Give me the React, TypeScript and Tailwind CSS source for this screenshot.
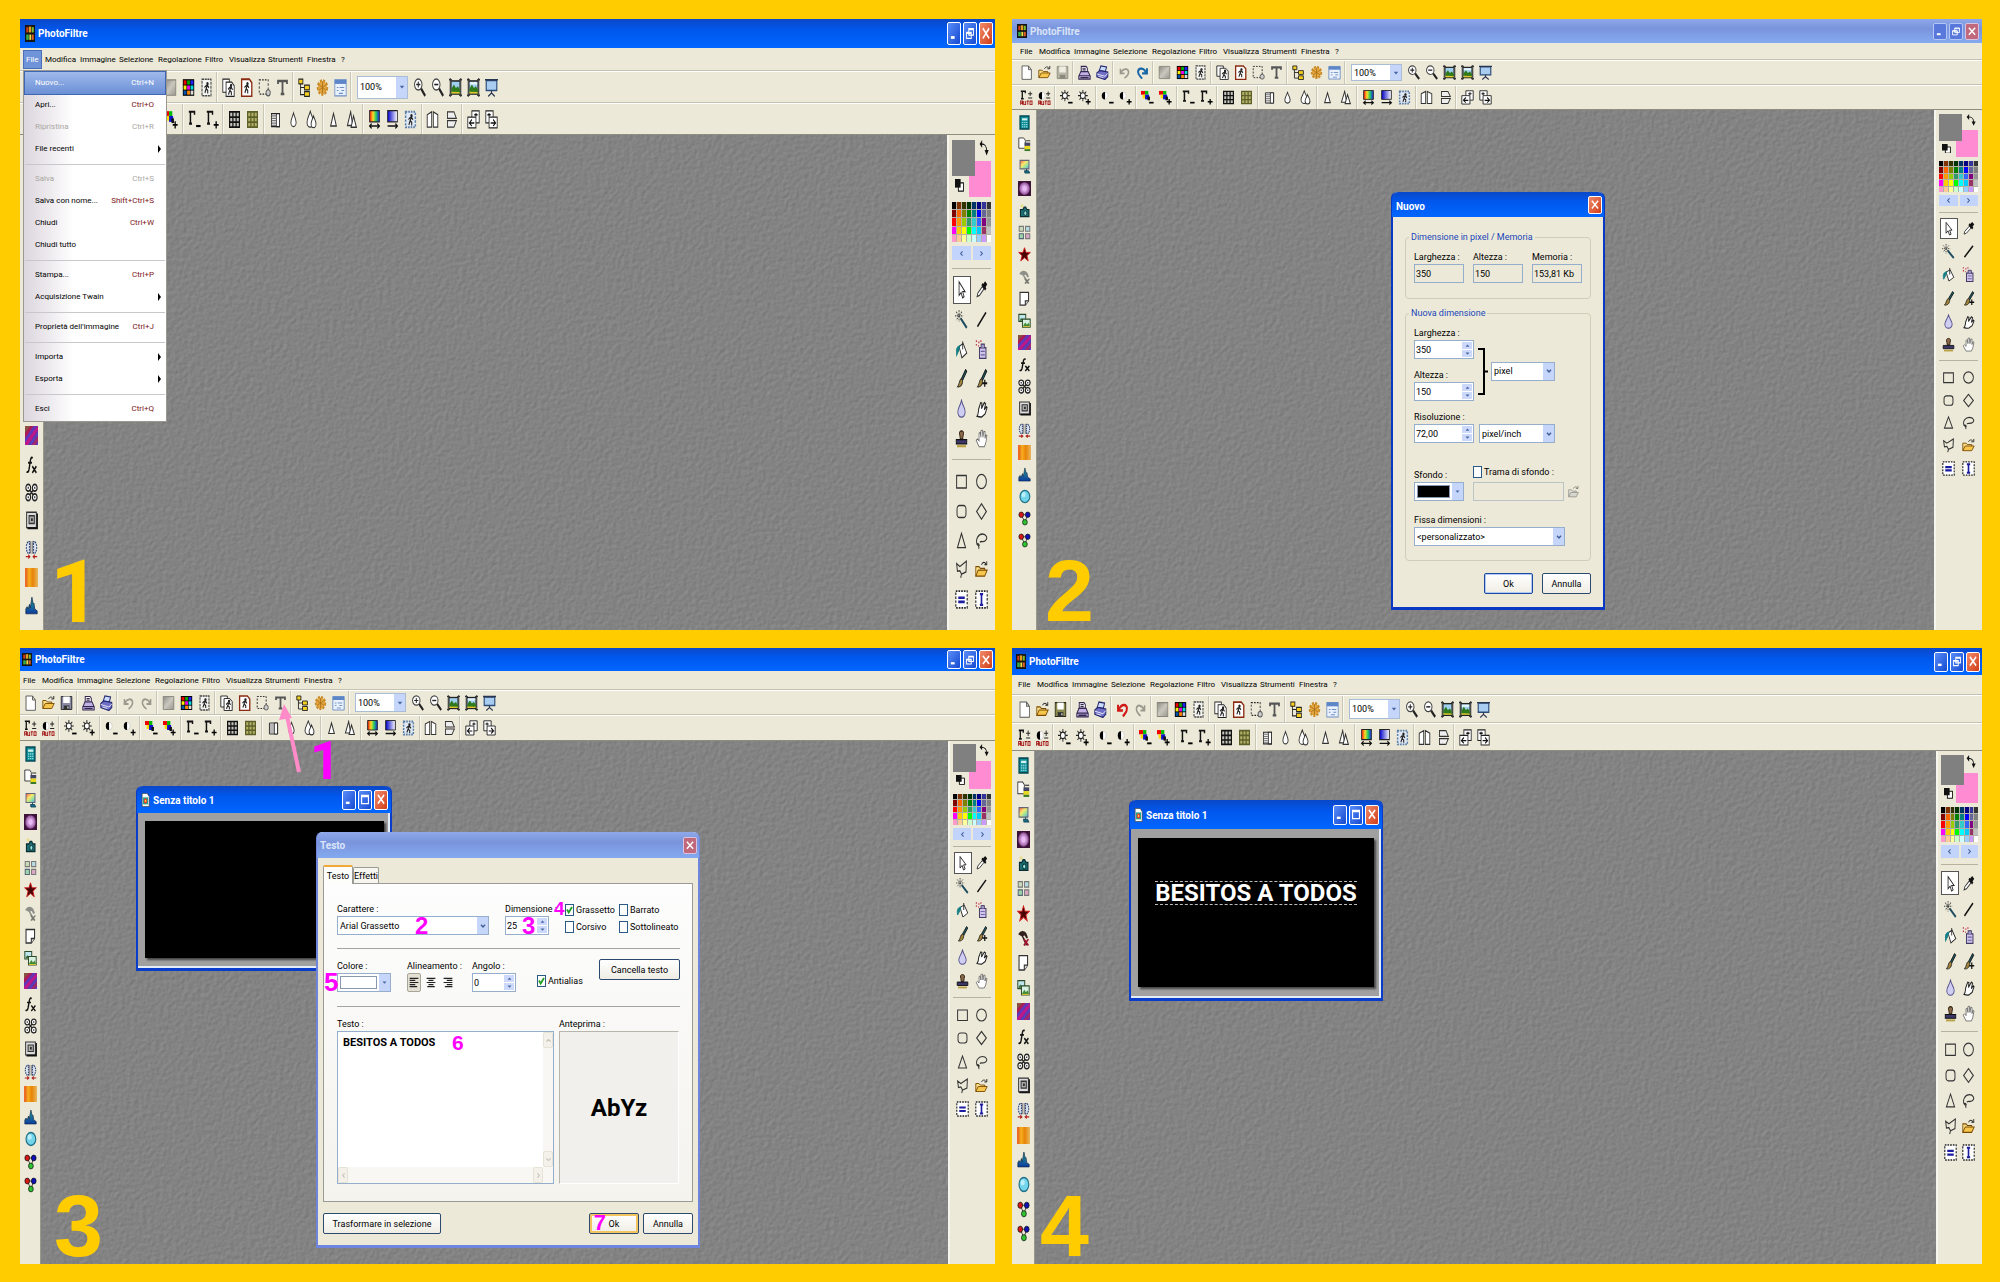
import { useId, type ReactNode } from "react";

/* ---------- icon drawings, 16 x 16 grid ---------- */

const man = (
  <g stroke="#222" strokeWidth="1.3" fill="none">
    <path d="M9 6.5 7.5 9l2 1.5V13M7.5 9 6 12.5M5.5 8l2-1.5h2l1.5 1.8" />
    <circle cx="9.2" cy="4.8" r=".8" fill="#222" />
  </g>
);
const minus = <path d="M10 13.5h5.5" stroke="#000" strokeWidth="1.8" />;
const plus = <path d="M9.5 12.5h6M12.5 9.5v6" stroke="#000" strokeWidth="1.6" />;
const gamma = <path d="M1 1.5h7V4M3 1.5v10M1.3 11.5h3.6" stroke="#111" strokeWidth="1.8" fill="none" />;
const halfMoon = (
  <g>
    <circle cx="5" cy="6" r="3.8" fill="#fff" stroke="#bbb" strokeWidth=".6" />
    <path d="M5 2a4 4 0 0 0 0 8z" fill="#000" />
  </g>
);
const sun = (
  <g stroke="#222" strokeWidth="1.1" fill="#fff">
    <path d="M6 0v12M0 6h12M1.8 1.8l8.4 8.4M10.2 1.8 1.8 10.2" />
    <circle cx="6" cy="6" r="3" />
  </g>
);
const rgb = (
  <g>
    <path d="M0 1h5v4H0z" fill="#e00" />
    <path d="M5 1h4v4H5z" fill="#0b0" />
    <path d="M2 5h4v4H2z" fill="#fd0" />
    <path d="M5 5h5v5H5z" fill="#11c" />
    <path d="M8 7h3v4H8z" fill="#111" />
  </g>
);
const autoMark = (
  <path
    d="M.8 15.800v-4h2.400v4M.8 14h2.400M4.600 11.800v4h2.400v-4M8.300 11.800h2.700M9.600 11.800v4M12.300 11.800h2.500v4h-2.500z"
    stroke="#a01010"
    strokeWidth="1.100"
    fill="none"
  />
);
const plusMinus = <path d="M10 4h5M12.5 1.5v5M10 8.5h5" stroke="#222" strokeWidth="1.1" />;
const printer = (
  <g stroke="#33284f" strokeWidth="1.2">
    <path d="M4 7V1.5h6l1.5 2V7z" fill="#fff" />
    <path d="M1 12 3.5 7h9L15 12v3H1z" fill="#c3b0e4" />
    <path d="M1 11.5h14M5.5 3.5h4M5.5 5.2h4M3 13.4h10" fill="none" />
  </g>
);
const landscape = (
  <g>
    <rect x="2.5" y="2.5" width="11" height="11" fill="#9fd0f0" stroke="#222" strokeWidth="1.300" />
    <path d="M3 13V9l3-3.500 2.5 3L11 7l2.500 3v3z" fill="#2f7a1c" />
    <path d="M3 13v-1.500l10 .2V13z" fill="#e5c430" />
    <path d="M1.500 0v16M14.500 0v16" stroke="#333" strokeWidth="1.2" />
    <path d="M0 1.500h3.500M12.500 1.500H16M0 14.500h3.500M12.500 14.500H16" stroke="#333" strokeWidth="1.2" />
  </g>
);
const folder = (
  <g stroke="#7a4a00" strokeWidth="1">
    <path d="M1 13.5v-8h4l1.5 1.5H12v2.5" fill="#fbe08a" />
    <path d="m1 13.5 3-5h11l-3 5z" fill="#f7c64d" />
    <path d="M8 4c1.5-2.5 4-2.5 5.5-.5M14.5 1v3h-3" stroke="#222" fill="none" />
  </g>
);
const magnifier = (
  <g>
    <circle cx="6.5" cy="5.5" r="4.6" fill="#fff" stroke="#444" strokeWidth="1.2" />
    <path d="m10 9 5 6" stroke="#222" strokeWidth="2.4" />
  </g>
);
const hammer = <path d="M1.5 5c3-4 7-4 10-1l2 4-2 1-2-3-2 .5L13 14l-2 2L6 7 4 6z" />;
const gridLines = <path d="M1 5.7h14M1 10.3h14M5.7 1v14M10.3 1v14" />;
const circles4 = (
  <g fill="#fff" stroke="#222" strokeWidth="1.4">
    <path d="M5 5l6 6M11 5l-6 6" />
    <circle cx="4" cy="4" r="2.9" />
    <circle cx="12" cy="4" r="2.9" />
    <circle cx="4" cy="12" r="2.9" />
    <circle cx="12" cy="12" r="2.9" />
    <path d="M4 3.2v1.600M12 3.2v1.600M4 11.2v1.600M12 11.2v1.600" />
  </g>
);
const dots3 = (
  <g stroke="#111" strokeWidth=".8">
    <path d="M4 4h8L8.500 12z" fill="none" />
    <circle cx="4" cy="4" r="2.900" fill="#d81818" />
    <circle cx="12" cy="4" r="2.900" fill="#1010b8" />
    <circle cx="8.500" cy="12" r="2.900" fill="#2fc52f" />
  </g>
);

const drawings: Record<string, ReactNode> = {
  app: (
    <g>
      <rect width="16" height="16" fill="#151515" />
      <path d="M2 2h3v5H2z" fill="#d43a1c" /><path d="M6 1.500h4V7H6z" fill="#e8a020" /><path d="M11 2h3v5h-3z" fill="#7fc030" />
      <path d="M2 9h4v5H2z" fill="#38b04a" /><path d="M7 9h3v5H7z" fill="#f0e040" /><path d="M11 9h3v5h-3z" fill="#e0602a" />
    </g>
  ),
  doc: (
    <g>
      <path d="M2 .5h9l3.500 3.500v11.500H2z" fill="#fff" stroke="#444" />
      <rect x="3.500" y="5" width="9" height="8" fill="#2a8" /><circle cx="8" cy="9" r="3" fill="#e33" /><circle cx="8" cy="9" r="1.300" fill="#fd3" />
    </g>
  ),
  new: <path d="M2.500 1h8L14 5v10.300H2.500zM10.500 1v4H14" fill="#fff" stroke="#555" />,
  open: folder,
  save: (
    <g>
      <path d="M1.500 1.500h13v13h-13z" fill="#8a8aa8" stroke="#222" /><path d="M4 1.500h8V8H4z" fill="#fff" /><path d="M4.500 10.500h7v4h-7z" fill="#333" /><path d="M9 11.500h1.500v2H9z" fill="#ddd" />
    </g>
  ),
  saveOlive: (
    <g>
      <path d="M1.500 1.500h13v13h-13z" fill="#8d8a4e" stroke="#2c2a16" /><path d="M4 1.500h8V8H4z" fill="#fff" /><path d="M4.500 10.500h7v4h-7z" fill="#333" /><path d="M9 11.500h1.500v2H9z" fill="#ddd" />
    </g>
  ),
  saveOff: (
    <g>
      <path d="M1.500 1.500h13v13h-13z" fill="#b9b6a6" stroke="#8b897c" /><path d="M4 1.500h8V8H4z" fill="#efede2" /><path d="M4.500 10.500h7v4h-7z" fill="#8b897c" />
    </g>
  ),
  print: printer,
  print2: (
    <g stroke="#23266e" strokeWidth="1.200">
      <path d="m4 6 2-5 7 1-1.500 5z" fill="#c9dcff" /><path d="M1 8.500 4.500 6l10 1.500v5L11 15.500 1 12.500z" fill="#6f6fc8" /><path d="M1 9.500 11 12l3.500-3M3 12l6 1.500" stroke="#fff" strokeWidth=".9" fill="none" />
    </g>
  ),
  undoOff: <path d="M3 4v5h5M3.500 8.500C6 3.500 12 3 13 7c.5 3-2 5-5 7" fill="none" stroke="#9b998d" strokeWidth="1.900" />,
  undo: <path d="M2.500 3.500v5.500h6M3.500 8.500C6 2.500 13 2.500 13.500 7c.3 3.500-3 5-5 7.500" fill="none" stroke="#d01818" strokeWidth="2.400" />,
  redoOff: <path d="M13 4v5H8M12.500 8.500C10 3.500 4 3 3 7c-.5 3 2 5 5 7" fill="none" stroke="#9b998d" strokeWidth="1.900" />,
  redo: <path d="M13.500 3.500v5.500h-6M12.500 8.500C10 2.500 3 2.500 2.500 7c-.3 3.500 3 5 5 7.500" fill="none" stroke="#1766a8" strokeWidth="2.400" />,
  grad: <path d="M1.500 1.500h13v13h-13z" fill="url(#pf-grey)" stroke="#88867c" />,
  colors: (
    <g>
      <path d="M1 1h14v14H1z" fill="#000" />
      <path d="M2 2h3.500v3.500H2z" fill="#e00" /><path d="M6.300 2h3.500v3.500H6.300z" fill="#0a0" /><path d="M10.600 2H14v3.500h-3.400z" fill="#22f" />
      <path d="M2 6.300h3.500v3.500H2z" fill="#fe0" /><path d="M6.300 6.300h3.500v3.500H6.300z" fill="#e0e" /><path d="M10.600 6.300H14v3.500h-3.400z" fill="#0dd" />
      <path d="M2 10.600h3.500V14H2z" fill="#05a" /><path d="M6.300 10.600h3.500V14H6.300z" fill="#f80" /><path d="M10.600 10.600H14V14h-3.400z" fill="#ddd" />
    </g>
  ),
  man: <g><path d="M2.500 1h11v14h-11z" fill="#f4f4f0" stroke="#444" strokeDasharray="2.500 .8" strokeWidth="1.300" />{man}</g>,
  copy: <g><path d="M1 1h8v11H1z" fill="#fff" stroke="#222" /><path d="M5 3.500h7l3 3V15.500H5z" fill="#fff" stroke="#222" /><g transform="translate(2 1.500)">{man}</g></g>,
  paste: <g><path d="M2 1h9.500l3 3v11.500H2z" fill="#fff" stroke="#8a2a10" strokeWidth="1.600" />{man}</g>,
  sel: <g fill="none"><path d="M1.500 1.500h11v12h-11z" stroke="#222" strokeDasharray="2 1.500" /><circle cx="12.500" cy="12.500" r="2.600" fill="#ccc" stroke="#555" /></g>,
  tree: (
    <g>
      <path d="M3 3v11h5M3 8h5" fill="none" stroke="#222" /><path d="M1 1h5v4H1zM8 6h6v4H8zM8 11.500h6v4H8z" fill="#f5d020" stroke="#222" />
    </g>
  ),
  gear: (
    <g>
      <circle cx="8" cy="8" r="5.500" fill="#e0a030" stroke="#c98a28" strokeWidth="3" strokeDasharray="2.400 1.300" /><circle cx="8" cy="8" r="5" fill="#e2a640" /><path d="M8 3v10M3.500 5.500l9 5M3.500 10.500l9-5" stroke="#a86a14" strokeWidth=".8" />
    </g>
  ),
  form: <g><path d="M1 1.500h14v13.500H1z" fill="#e9f1fc" stroke="#6d8fc2" /><path d="M1 1.500h14v3.500H1z" fill="#5c86c8" /><path d="M3.500 8h2M7 8h5.500M3.500 10.500h2M9 10.500h3.500M6 13h5" stroke="#6d8fc2" /></g>,
  zoomIn: <g>{magnifier}<path d="M4 5.500h5M6.500 3v5" stroke="#222" strokeWidth="1.200" /></g>,
  zoomOut: <g>{magnifier}<path d="M4 5.500h5" stroke="#222" strokeWidth="1.400" /></g>,
  fit: landscape,
  fit2: <g>{landscape}<path d="M3.500 4.500h9" stroke="#e8f4fc" strokeWidth="2" /></g>,
  screen: <g><path d="M1.500 2h13v8.500h-13z" fill="#a9cdf0" stroke="#2a4a78" strokeWidth="1.400" /><path d="M0 1.500h16M8 10.500v3M4 15.500l4-3 4 3" stroke="#2a3550" strokeWidth="1.300" fill="none" /></g>,
  gammaAuto: <g><path d="M1 1.200h5.500V3.500M2.800 1.200v8M1.200 9.200h3.400" stroke="#111" strokeWidth="1.600" fill="none" />{plusMinus}{autoMark}</g>,
  contrastAuto: <g>{halfMoon}{plusMinus}{autoMark}</g>,
  sunMinus: <g>{sun}{minus}</g>,
  sunPlus: <g>{sun}{plus}</g>,
  moonMinus: <g>{halfMoon}{minus}</g>,
  moonPlus: <g>{halfMoon}{plus}</g>,
  rgbMinus: <g>{rgb}{minus}</g>,
  rgbPlus: <g>{rgb}{plus}</g>,
  gammaMinus: <g>{gamma}{minus}</g>,
  gammaPlus: <g>{gamma}{plus}</g>,
  gridDark: <g stroke="#111" strokeWidth="1.500"><path d="M2 1.500h12v13H2z" fill="#c4c4bc" /><path d="M2 6h12M2 10.300h12M6 1.500v13M10 1.500v13" /></g>,
  gridOlive: <g stroke="#5c6028" strokeWidth="1.500"><path d="M2 1.500h12v13H2z" fill="#b3b068" /><path d="M2 6h12M2 10.300h12M6 1.500v13M10 1.500v13" /></g>,
  half: <g><path d="M3 3h10v11H3z" fill="#eee" stroke="#222" /><path d="M9 3h4v11H9z" fill="#fff" stroke="#222" /><path d="M3.500 5h5M3.500 7h5M3.500 9h5M3.500 11h5M3.500 13h5" stroke="#777" strokeWidth="1" /></g>,
  drop: <path d="M8 2.500c-1.500 4-3.200 5.500-3.200 8a3.200 3.500 0 0 0 6.400 0c0-2.500-1.700-4-3.200-8z" fill="#fff" stroke="#333" strokeWidth="1.100" />,
  drop2: <g fill="#fff" stroke="#333" strokeWidth="1.100"><path d="M6.500 1C5 5 2.500 7 2.500 10.500a4 4 0 0 0 8 0C10.500 7 8 5 6.500 1z" /><path d="M10.500 5c-1.200 3-3 4.300-3 6.700a3 3.200 0 0 0 6 0c0-2.400-1.800-3.700-3-6.700z" /></g>,
  tri: <path d="M8 3 4.500 13.500h7z" fill="#fff" stroke="#333" strokeWidth="1.200" />,
  tri2: <g fill="#fff" stroke="#333" strokeWidth="1.200"><path d="M7 1.500 3 13h6.500z" /><path d="M10.500 5 7.500 14.500h6.500z" /></g>,
  rainbow: <g><path d="M2 .5h12v9.500H2z" fill="url(#pf-rainbow)" stroke="#222" /><path d="M2 13.500h12M4.500 11.500l-2.500 2 2.500 2M11.500 11.500l2.500 2-2.500 2" stroke="#111" strokeWidth="1.300" fill="none" /></g>,
  blueGrad: <g><path d="M2 .5h12v9.500H2z" fill="url(#pf-blue)" stroke="#222" /><path d="M2 13.500h12M11.500 11.500l2.500 2-2.500 2" stroke="#111" strokeWidth="1.300" fill="none" /></g>,
  stamp: <g><path d="M2 1.500h12v13H2z" fill="#dfe9f5" stroke="#5a7ea8" strokeWidth="1.800" strokeDasharray="2 1.200" />{man}</g>,
  flipH: <path d="M1.500 4 7 1.500v13H1.500zM9 1.500 14.500 4v10.500H9z" fill="#fff" stroke="#333" strokeWidth="1.100" />,
  flipV: <path d="M3 1.500h8l3 5.500H3zM3 9h11l-3 5.500H3z" fill="#eee" stroke="#333" strokeWidth="1.100" />,
  rotL: <g><path d="M6 .8h9v10H6z" fill="#fff" stroke="#222" /><path d="M1 6h10v9H1z" fill="#fff" stroke="#222" /><path d="M3 11h6M6 8l-3 3 3 2.500M9 4h4M11 2.500v3" stroke="#111" strokeWidth="1.200" fill="none" /></g>,
  rotR: <g><path d="M1 .8h9v10H1z" fill="#fff" stroke="#222" /><path d="M5 6h10v9H5z" fill="#fff" stroke="#222" /><path d="M7 11h6M10 8l3 3-3 2.500M3 4h4M5 2.500v3" stroke="#111" strokeWidth="1.200" fill="none" /></g>,
  calc: <g><path d="M2.500 1h11v14h-11z" fill="#0f8f96" stroke="#064a55" strokeWidth="1.600" /><path d="M5 3.500h6.500v2.300H5z" fill="#d6f2f0" /><path d="M5 8h6.500M5 10.300h6.500M5 12.600h6.500" stroke="#9adbe0" strokeWidth="1.300" strokeDasharray="1.500 1" /></g>,
  pageColor: <g><path d="M1 1h6l2 2.500V12H1z" fill="#fff" stroke="#333" /><path d="M8 6h7v3.500H8z" fill="#446" /><path d="M8 9.500h7V13H8z" fill="#e8d81c" /><path d="M8 13h7v2H8z" fill="#3a7a28" /><path d="M10 4h5" stroke="#222" /></g>,
  monitor: <g><path d="M2.500 1.500h11v9h-11z" fill="url(#pf-rainbow-soft)" stroke="#667" strokeWidth="1.200" /><path d="M10.500 10.500v2.500M8 12.500h5l1.500 2.500h-6z" stroke="#134a60" fill="#1b6a80" /></g>,
  vignette: <g><path d="M0 0h16v16H0z" fill="#3c1238" /><ellipse cx="8" cy="8" rx="6.500" ry="6.800" fill="url(#pf-violet)" /></g>,
  camera: <g><path d="M3 7h3l1.500-2.500h2L11 7h2.500v7.500H3z" fill="#1c6f74" stroke="#0b2d30" strokeWidth="1.300" /><ellipse cx="9" cy="10.800" rx="2" ry="2.400" fill="#8fe0d8" stroke="#0b2d30" /><path d="M5 1v4M3 3h4" stroke="#e6dc7a" strokeWidth="1.200" /></g>,
  squares: <g strokeWidth="1.200"><path d="M1.500 1.500h5.200v5.200H1.500z" fill="#c9dcb9" stroke="#777" /><path d="M9.300 1.500h5.200v5.200H9.300z" fill="#b7dbe2" stroke="#777" /><path d="M1.500 9.300h5.200v5.200H1.500z" fill="#9ed2a8" stroke="#567" /><path d="M9.300 9.300h5.200v5.200H9.300z" fill="#d9a9c4" stroke="#777" /></g>,
  star: <path d="m8 .8 1.900 5h5.300l-4.200 3.400 1.600 5.600L8 11.500l-4.600 3.300L5 9.200.8 5.800h5.300z" fill="#4a0606" stroke="#d01c1c" strokeWidth="1" />,
  hammerOff: <g fill="#8f8f8a">{hammer}<path d="m8.500 10.500 5 5M14 10.500l-5.500 5" stroke="#77776f" strokeWidth="1.600" /></g>,
  hammer: <g fill="#33211f">{hammer}<path d="m8.500 9.500 5.500 6M14 9.500l-5.500 6" stroke="#a11430" strokeWidth="1.900" /></g>,
  curl: <g><path d="M2.500 1.500h10.500v9l-4 4.500H2.500z" fill="#fff" stroke="#333" strokeWidth="1.300" /><path d="M13 10.500H9V15" fill="#ddd" stroke="#333" strokeWidth="1.300" /></g>,
  pics: <g strokeWidth="1.200"><path d="M1 1.500h8.500v7.500H1z" fill="#bfe6ee" stroke="#2a4a2a" /><path d="M1.500 8.500 4 5l2 3z" fill="#386a30" /><path d="M5.500 6.500h9.500v8.500H5.500z" fill="#d8f0e0" stroke="#2a4a2a" /><path d="m6 14 3-4 2 2.500 2-2 1.800 3.500z" fill="#3f8a34" /><path d="M6 14h8.700v1H6z" fill="#ddc030" /></g>,
  stripes: (
    <g>
      <path d="M0 0h16v16H0z" fill="#7a2a9c" /><path d="M0 0h7L0 6z" fill="#8a5040" /><path d="M7 0h3L0 10V6z" fill="#b01a50" /><path d="M12 0h2L0 14v-3z" fill="#5a3ac0" />
      <path d="M16 0v3L3 16H0v-2z" fill="#c0188a" /><path d="M16 5v2L7 16H5z" fill="#4a48c8" /><path d="M16 9v3l-4 4H9z" fill="#a82a60" /><path d="M16 14v2h-2z" fill="#5a4ad0" />
    </g>
  ),
  fx: <path d="M9.500 2.500C7.500 1.500 6.800 3 6.300 6L5 12c-.5 2-1.500 3-3 2M3.800 6.500h4.700M9 9.500l5 5.500M14 9.500 9 15" fill="none" stroke="#111" strokeWidth="1.700" />,
  circles: circles4,
  nested: <g><path d="M2 1h12v13H2z" fill="#ddd" stroke="#333" strokeWidth="1.200" /><path d="M3 14.500h12V2" fill="none" stroke="#111" strokeWidth="1.800" /><path d="M5 4h6.500v6.500H5z" fill="#aaa" stroke="#333" strokeWidth="1.200" /><path d="M7.500 6h2v2.500h-2z" fill="#222" /></g>,
  mirror: <g strokeWidth="1.300"><path d="M3.500 1.500C1 4 1 8.500 3.500 11h2v-9.500zM12.500 1.500c2.500 2.500 2.500 7 0 9.500h-2v-9.500z" stroke="#334a78" fill="#dbe2f0" strokeDasharray="1.600 .8" /><path d="M7 1v10.500M9 1v10.500" stroke="#556" strokeWidth=".8" /><path d="M1 14h5.500M9.500 14H15M4 12.500 6 14l-2 1.500M12 12.500 10 14l2 1.500" stroke="#b02020" fill="none" strokeWidth="1.100" /></g>,
  orange: <path d="M0 0h16v16H0z" fill="url(#pf-orange)" />,
  histogram: <path d="M1 15v-4l1.500-2 1.500 2 1.500-4 1 3L8.500 1 10 6.500l1-.5L12 11l3 1.500V15z" fill="url(#pf-hist)" stroke="#0c2448" strokeWidth=".7" />,
  ellipseBlue: <g><ellipse cx="8.500" cy="8" rx="6" ry="6.500" fill="#74d4ea" stroke="#20708a" strokeWidth="1.400" /><ellipse cx="7" cy="6" rx="2.500" ry="2.800" fill="#b9effa" /></g>,
  dots: dots3,
  swap: <g><path d="M5 0 1 4l4 4zM9 10h6.500L12.200 15.500z" fill="#111" /><path d="M4 4c6 0 8 2 8.200 7" fill="none" stroke="#111" strokeWidth="1.300" /></g>,
  bw: <g><path d="M6 5h9v10.500H6z" fill="#fff" stroke="#111" strokeWidth="1.600" /><path d="M0 0h10v11H0z" fill="#111" /></g>,
  cursor: <path d="M5 1.500v11.500l2.500-2.500 1.800 4.500 1.900-1-1.800-4.200h3z" fill="#fff" stroke="#222" strokeWidth="1" />,
  dropper: <g><path d="m2.500 14 1-3 5.500-5.500 2 2L5.500 13z" fill="#fff" stroke="#333" /><path d="m8 4.500 4.500 4.500L14 7l-1-1 2-2.500-2.500-2.500L10 3.300 9 2.500z" fill="#111" /></g>,
  wand: <g><path d="m7 7 7.500 8" stroke="#1c4a5e" strokeWidth="2.200" /><path d="M5 0v10M0 5h10M1.500 1.500l7 7M8.500 1.500l-7 7" stroke="#444" strokeWidth="1" strokeDasharray="1.600 .8" /></g>,
  line: <path d="M3 14 13.500 2" stroke="#111" strokeWidth="1.700" />,
  bucket: <g><path d="M5 5.500 10 3l4.500 8-6 4z" fill="#fff" stroke="#222" /><path d="M9.500 1v7" stroke="#222" /><path d="M6 5C2 5.500 1 8 2 13l2.500-4z" fill="#167f86" stroke="#167f86" /></g>,
  spray: <g><path d="M5.500 6.500h8v9h-8z" fill="#cfc4ea" stroke="#433a66" strokeWidth="1.200" /><path d="M7.500 6.500v-3h4v3" fill="#a89cc8" stroke="#433a66" /><path d="M1 1h1.500M4 2h1.500M1 4h1.500M4 5h1M6.500 1H8" stroke="#c03a50" strokeWidth="1.400" /><path d="M7 9.500h5M7 12.500h5" stroke="#6b5fa0" /></g>,
  brush: <g><path d="M13 .5 8 8l1.500 1.500L14.500 2z" fill="#1c5860" stroke="#111" strokeWidth=".9" /><path d="M8 8C5 8.500 6 12.500 3 15c3.500.500 6.500-1.500 6.500-5.500z" fill="#a08238" stroke="#222" strokeWidth=".9" /></g>,
  tear: <path d="M8 1C6.500 6 3.500 7.500 3.500 11a4.500 4.300 0 0 0 9 0C12.500 7.500 9.500 6 8 1z" fill="#cfcdf2" stroke="#55528a" strokeWidth="1.100" />,
  smudge: <path d="M2.500 14.500c2-2 1.500-3.500 2-6L7 3l1.500.5L8 8l3.500-5L13 4l-1.500 5L14 6.500l.8.8-2.300 5.200-4 2.500c-2 .5-4 0-6-.5z" fill="#fff" stroke="#222" strokeWidth="1.200" />,
  rubber: <g><path d="M8 1.500c2.500 0 3 2 2 4l-.5 3h-3L6 5.500c-1-2-.5-4 2-4z" fill="#8a6a4a" stroke="#2a1a0a" /><path d="M1.500 9h13v3.500h-13z" fill="#3b3568" stroke="#111" /><path d="M2.500 14.500h11" stroke="#b9a040" strokeWidth="1.800" /></g>,
  hand: <path d="M5 15 1.500 9.500 3 8.300 5 10V3.500L6.500 3l.8 4V1.500L9 1l.8 6 1-5 1.500.3V8l1.200-3 1.200.5-1.500 6.500L11.500 15z" fill="#fff" stroke="#666" strokeWidth=".9" />,
  rect: <path d="M2 3h12v10.500H2z" fill="none" stroke="#333" strokeWidth="1.200" />,
  oval: <circle cx="8" cy="8" r="6" fill="none" stroke="#333" strokeWidth="1.200" />,
  roundRect: <rect x="2.500" y="3" width="11" height="10" rx="3" fill="none" stroke="#333" strokeWidth="1.200" />,
  diamond: <path d="m8 1.500 6 6.500-6 6.500L2 8z" fill="none" stroke="#333" strokeWidth="1.200" />,
  triangle: <path d="M8 2 3 14h10z" fill="none" stroke="#333" strokeWidth="1.200" />,
  lasso: <path d="M4.500 15c1-1.500-.5-3-2-4 2-1 2.500.5 3 1.500M2.500 11C.5 7 4 2.500 9 2.500s7 3.500 4 5.500-5 0-7 1.500" fill="none" stroke="#333" strokeWidth="1.200" />,
  polyLasso: <path d="m2 3 4 2.500 8-4.500-.5 9L8 12 6 9 3 9.500zM8 12l-1 3" fill="none" stroke="#333" strokeWidth="1.200" />,
  selH: <g><path d="M1 1h14v14H1z" fill="#fff" stroke="#222" strokeWidth="1.400" strokeDasharray="2 1.300" /><path d="M4 6.500h8M4 10h8" stroke="#1c1ca0" strokeWidth="2.200" /></g>,
  selV: <g><path d="M1 1h14v14H1z" fill="#fff" stroke="#222" strokeWidth="1.400" strokeDasharray="2 1.300" /><path d="M8 3.500v9M6 3.500h4M6 12.500h4" stroke="#1c1ca0" strokeWidth="2" /></g>,
  letterT: <path d="M2.500 5V2.500h11V5M8 2.500v11M5.800 13.500h4.400" fill="none" stroke="#555" strokeWidth="2.200" />,
  down: <path d="m4 5.500 4 4.500 4-4.500" fill="none" stroke="#3e5c96" strokeWidth="2.600" />,
  up: <path d="m3.500 11 4.500-5.500 4.500 5.500z" fill="#4a66a4" />,
  downSolid: <path d="m3.500 5.500 4.500 5.500 4.500-5.500z" fill="#4a66a4" />,
  left: <path d="M10.500 3 6 8l4.500 5" fill="none" stroke="#3e5c96" strokeWidth="2.400" />,
  right: <path d="M5.500 3 10 8l-4.500 5" fill="none" stroke="#3e5c96" strokeWidth="2.400" />,
  leftOff: <path d="M10.500 3 6 8l4.500 5" fill="none" stroke="#c4c2b4" strokeWidth="2.400" />,
  rightOff: <path d="M5.500 3 10 8l-4.500 5" fill="none" stroke="#c4c2b4" strokeWidth="2.400" />,
  upOff: <path d="m3 10.500 5-5 5 5" fill="none" stroke="#c4c2b4" strokeWidth="2.400" />,
  downOff: <path d="m3 5.500 5 5 5-5" fill="none" stroke="#c4c2b4" strokeWidth="2.400" />,
  min: <path d="M3 12.500h6" stroke="#fff" strokeWidth="3" />,
  max: <path d="M2.500 3h11v10.500h-11zM2.500 4.500h11" fill="none" stroke="#fff" strokeWidth="1.800" />,
  restore: <path d="M6 3h7.500v7H6zM6 4h7.500M2.500 7H10v6.500H2.500zM2.500 8H10" fill="none" stroke="#fff" strokeWidth="1.400" />,
  close: <path d="m3 2.500 10 11M13 2.500 3 13.500" stroke="#fff" strokeWidth="2.300" />,
  alignL: <path d="M1 2h14M1 5h9M1 8h14M1 11h9M1 14h12" stroke="#222" strokeWidth="1.700" />,
  alignC: <path d="M1 2h14M4 5h8M1 8h14M4 11h8M2 14h12" stroke="#222" strokeWidth="1.700" />,
  alignR: <path d="M1 2h14M6 5h9M1 8h14M6 11h9M3 14h12" stroke="#222" strokeWidth="1.700" />,
  brushPlus: null,
};
drawings.brushPlus = (
  <g>
    {drawings.brush}
    <path d="M9 12h6M12 9v6" stroke="#111" strokeWidth="1.500" />
  </g>
);
drawings.grid = gridLines;

function Icon({ name, className }: { name: string; className: string }) {
  return (
    <svg viewBox="0 0 16 16" preserveAspectRatio="none" className={className} aria-hidden="true">
      {drawings[name]}
    </svg>
  );
}

function Defs() {
  return (
    <svg className="absolute size-0" aria-hidden="true">
      <defs>
        <linearGradient id="pf-grey" x2="1" y2="1"><stop offset="0" stopColor="#8d8b84" /><stop offset=".5" stopColor="#c9c7be" /><stop offset="1" stopColor="#98968e" /></linearGradient>
        <linearGradient id="pf-rainbow"><stop offset="0" stopColor="#e11" /><stop offset=".35" stopColor="#fd2" /><stop offset=".65" stopColor="#2c6" /><stop offset="1" stopColor="#22d" /></linearGradient>
        <linearGradient id="pf-rainbow-soft" x2="1" y2="1"><stop offset="0" stopColor="#f7574c" /><stop offset=".4" stopColor="#fbe96a" /><stop offset=".7" stopColor="#8fe0a0" /><stop offset="1" stopColor="#5a9af0" /></linearGradient>
        <linearGradient id="pf-blue"><stop offset="0" stopColor="#0000c8" /><stop offset="1" stopColor="#fff" /></linearGradient>
        <radialGradient id="pf-violet"><stop offset=".3" stopColor="#e9b9f4" /><stop offset="1" stopColor="#8a4a90" /></radialGradient>
        <linearGradient id="pf-orange"><stop offset="0" stopColor="#f0662a" /><stop offset=".15" stopColor="#e8741c" /><stop offset=".3" stopColor="#f8b020" /><stop offset=".6" stopColor="#e88408" /><stop offset="1" stopColor="#e8b860" /></linearGradient>
        <linearGradient id="pf-hist" x2="0" y2="1"><stop offset="0" stopColor="#2aa89a" /><stop offset="1" stopColor="#0c3a9c" /></linearGradient>
        <filter id="pf-paper" x="0" y="0" width="100%" height="100%" colorInterpolationFilters="sRGB">
          <feTurbulence type="fractalNoise" baseFrequency="0.24" numOctaves="3" seed="4" />
          <feDiffuseLighting surfaceScale="0.22" lightingColor="#b6b6b6" diffuseConstant="1"><feDistantLight azimuth="225" elevation="46" /></feDiffuseLighting>
        </filter>
      </defs>
    </svg>
  );
}

/* ---------- per-window metrics ---------- */

type Look = {
  inactive?: boolean;
  title: string; appIcon: string; caption: string; menu: string; bar1: string; bar2: string; icon: string; zoom: string;
  rail: string; railList: string; side: string; swatches: string; colors: string; pager: string; tools: string; shapes: string; cell: string;
};

const looks: Record<"a" | "b" | "c" | "d", Look> = {
  a: {
    title: "h-[29px] pl-[5px] pr-[2px]", appIcon: "h-[17px] w-[10px]", caption: "h-[23px]", menu: "h-[23px] pl-1", bar1: "h-8 pl-[3px]", bar2: "h-8 pl-[3px]", icon: "h-[19px] w-[13px]", zoom: "h-[23px]",
    rail: "w-6 pt-[3px]", railList: "h-[482px]", side: "w-12 pt-[5px]", swatches: "h-[57px]", colors: "mt-[5px] h-10", pager: "mt-1 h-[14px]", tools: "mt-2 h-[192px] py-[6px]", shapes: "h-[160px] pt-[7px] pb-[6px]", cell: "h-7",
  },
  b: {
    inactive: true,
    title: "h-[24px] pl-[5px] pr-[3px]", appIcon: "h-[14px] w-[10px]", caption: "h-[17px]", menu: "h-[17px] pl-[6px]", bar1: "h-[25px] pl-[5px]", bar2: "h-[25px] pl-[5px]", icon: "h-[15px] w-[13px]", zoom: "h-[17px]",
    rail: "w-[25px] pt-[2px]", railList: "h-[439px]", side: "w-12 pt-1", swatches: "h-[43px]", colors: "mt-1 h-[31px]", pager: "mt-[3px] h-[11px]", tools: "mt-[6px] h-[149px] py-[4px]", shapes: "h-[124px] pt-[5px] pb-[5px]", cell: "h-[21px]",
  },
  c: {
    title: "h-[23px] pl-[2px] pr-[2px]", appIcon: "h-[13px] w-[10px]", caption: "h-[19px]", menu: "h-[19px] pl-[1px]", bar1: "h-[25px] pl-[1px]", bar2: "h-[26px] pl-[1px]", icon: "h-[16px] w-[13px]", zoom: "h-[19px]",
    rail: "w-[21px] pt-[2px]", railList: "h-[453px]", side: "w-[47px] pt-[3px]", swatches: "h-[45px]", colors: "mt-[5px] h-[31px]", pager: "mt-[3px] h-3", tools: "mt-[6px] h-[152px] py-[4px]", shapes: "h-[126px] pt-[5px] pb-[3px]", cell: "h-[22px]",
  },
  d: {
    title: "h-[27px] pl-1 pr-[2px]", appIcon: "h-[15px] w-[10px]", caption: "h-5", menu: "h-5 pl-1", bar1: "h-7 pl-[3px]", bar2: "h-7 pl-[3px]", icon: "h-[17px] w-[13px]", zoom: "h-5",
    rail: "w-[23px] pt-[2px]", railList: "h-[493px]", side: "w-[46px] pt-1", swatches: "h-[48px]", colors: "mt-1 h-[35px]", pager: "mt-[3px] h-[13px]", tools: "mt-[6px] h-[168px] py-[5px]", shapes: "h-[138px] pt-[5px] pb-[5px]", cell: "h-6",
  },
};

/* ---------- window chrome ---------- */

const blueBar = "bg-linear-to-b from-[#0a48c8] via-[#0058ee] via-40% to-[#0066ff]";
const paleBar = "bg-linear-to-b from-[#8ea8ea] via-[#7a94dc] via-40% to-[#84aaf0]";

function CaptionButton({ kind, pale, size }: { kind: "min" | "max" | "restore" | "close"; pale?: boolean; size: string }) {
  const tone =
    kind === "close"
      ? pale ? "bg-[#c0697c] border-[#dbc3e0]" : "bg-linear-to-br from-[#f08a68] to-[#d03a14] border-white"
      : pale ? "bg-[#5878dc] border-[#b4c6f6]" : "bg-linear-to-br from-[#5a8cf8] to-[#1448d0] border-white";
  const label = { min: "Riduci a icona", max: "Ingrandisci", restore: "Ripristina in basso", close: "Chiudi" }[kind];
  return (
    <button type="button" aria-label={label} className={`flex w-[14px] items-center justify-center rounded-xs border ${tone} ${size}`}>
      <Icon name={kind} className="h-[70%] w-[10px]" />
    </button>
  );
}

function TitleBar({ look }: { look: Look }) {
  return (
    <header className={`flex shrink-0 items-center ${look.inactive ? paleBar : blueBar} ${look.title}`}>
      <Icon name="app" className={look.appIcon} />
      <h2 className={`ml-[3px] flex-1 pt-px text-[10px] font-bold leading-4 ${look.inactive ? "text-[#d8e4f8]" : "text-white"}`}>PhotoFiltre</h2>
      <div className="flex gap-[2px]">
        <CaptionButton kind="min" pale={look.inactive} size={look.caption} />
        <CaptionButton kind="restore" pale={look.inactive} size={look.caption} />
        <CaptionButton kind="close" pale={look.inactive} size={look.caption} />
      </div>
    </header>
  );
}

const menuEntries: [string, string][] = [
  ["File", "w-[17px] mr-[2px]"], ["Modifica", "w-[35px]"], ["Immagine", "w-[39px]"], ["Selezione", "w-[39px]"], ["Regolazione", "w-[47px]"],
  ["Filtro", "w-6"], ["Visualizza", "w-[39px]"], ["Strumenti", "w-[39px]"], ["Finestra", "w-[34px]"], ["?", "w-2"],
];

function MenuBar({ look, open, children }: { look: Look; open?: boolean; children?: ReactNode }) {
  return (
    <nav className={`relative flex shrink-0 items-center border-b border-[#c5c2b2] bg-[#ece9d8] text-[8px] ${look.menu}`}>
      {menuEntries.map(([name, width], i) => (
        <button
          key={name}
          type="button"
          className={`px-[2px] text-left leading-[17px] ${width} ${open && i === 0 ? "bg-[#6f94d8] text-white outline outline-[#4a6fb8]" : ""}`}
        >
          {name}
        </button>
      ))}
      {children}
    </nav>
  );
}

function ToolButton({ name, look }: { name: string; look: Look }) {
  return (
    <button type="button" aria-label={name} className="flex w-[18px] shrink-0 items-center justify-center">
      <Icon name={name} className={look.icon} />
    </button>
  );
}

const Rule = () => <span className="mx-[1px] h-full w-[2px] shrink-0 border-l border-r border-l-[#c9c6b4] border-r-[#f8f7f0]" />;

function Groups({ groups, look }: { groups: string[][]; look: Look }) {
  return (
    <>
      {groups.map((group, g) => [
        g > 0 ? <Rule key={`r${g}`} /> : null,
        ...group.map((name, i) => <ToolButton key={`${g}-${i}`} name={name} look={look} />),
      ])}
    </>
  );
}

function Toolbars({ look, save, undo, redo }: { look: Look; save: string; undo: string; redo: string }) {
  return (
    <>
      <div className={`flex shrink-0 items-center border-t border-b border-t-white border-b-[#c5c2b2] bg-[#ece9d8] ${look.bar1}`}>
        <Groups
          look={look}
          groups={[["new", "open", save], ["print", "print2"], [undo, redo], ["grad", "colors", "man"], ["copy", "paste", "sel", "letterT"], ["tree", "gear", "form"]]}
        />
        <Rule />
        <div className={`relative mr-[2px] ml-[4px] w-[51px] border border-[#a9bdd6] bg-white ${look.zoom}`}>
          <select aria-label="Zoom" className="size-full appearance-none pl-[2px] text-[9px] outline-none">
            <option>100%</option>
          </select>
          <span className="pointer-events-none absolute inset-y-0 right-0 flex w-[11px] items-center justify-center bg-[#c6d5fa]">
            <Icon name="downSolid" className="size-[8px]" />
          </span>
        </div>
        {["zoomIn", "zoomOut", "fit", "fit2", "screen"].map((n) => <ToolButton key={n} name={n} look={look} />)}
      </div>
      <div className={`flex shrink-0 items-center border-t border-b border-t-white border-b-[#8f8d80] bg-[#ece9d8] ${look.bar2}`}>
        <div className="flex h-full w-[478px] items-center justify-between">
          <Groups
            look={look}
            groups={[
              ["gammaAuto", "contrastAuto"], ["sunMinus", "sunPlus"], ["moonMinus", "moonPlus"], ["rgbMinus", "rgbPlus"], ["gammaMinus", "gammaPlus"],
              ["gridDark", "gridOlive"], ["half", "drop", "drop2"], ["tri", "tri2"], ["rainbow", "blueGrad", "stamp"], ["flipH", "flipV"], ["rotL", "rotR"],
            ]}
          />
        </div>
      </div>
    </>
  );
}

const railIcons = ["calc", "pageColor", "monitor", "vignette", "camera", "squares", "star", "hammerOff", "curl", "pics", "stripes", "fx", "circles", "nested", "mirror", "orange", "histogram", "ellipseBlue", "dots", "dots"];

function Rail({ look, count = 20, hammer }: { look: Look; count?: number; hammer?: boolean }) {
  return (
    <aside className={`shrink-0 border-r border-[#9a988a] bg-[#ece9d8] ${look.rail}`}>
      <div className={`flex flex-col ${look.railList}`}>
        {railIcons.slice(0, count).map((name, i) => (
          <button key={i} type="button" aria-label={name} className="flex flex-1 items-center justify-center">
            <Icon name={hammer && name === "hammerOff" ? "hammer" : name} className={look.icon} />
          </button>
        ))}
      </div>
    </aside>
  );
}

const colorCells = [
  "bg-[#000000]", "bg-[#803300]", "bg-[#333300]", "bg-[#003300]", "bg-[#003366]", "bg-[#000080]", "bg-[#333399]", "bg-[#333333]",
  "bg-[#800000]", "bg-[#ff6600]", "bg-[#808000]", "bg-[#008000]", "bg-[#008080]", "bg-[#0000ff]", "bg-[#666699]", "bg-[#808080]",
  "bg-[#ff0000]", "bg-[#ff9900]", "bg-[#99cc00]", "bg-[#339966]", "bg-[#33cccc]", "bg-[#3366ff]", "bg-[#800080]", "bg-[#969696]",
  "bg-[#ff00ff]", "bg-[#ffcc00]", "bg-[#ffff00]", "bg-[#00ff00]", "bg-[#00ffff]", "bg-[#00ccff]", "bg-[#993366]", "bg-[#c0c0c0]",
  "bg-[#ff99cc]", "bg-[#ffcc99]", "bg-[#ffff99]", "bg-[#ccffcc]", "bg-[#ccffff]", "bg-[#99ccff]", "bg-[#cc99ff]", "bg-[#ffffff]",
];

function Side({ look }: { look: Look }) {
  return (
    <aside className={`flex shrink-0 flex-col border-l-2 border-[#f6f5ee] bg-[#ece9d8] pr-1 pl-[3px] ${look.side}`}>
      <div className={`relative shrink-0 ${look.swatches}`}>
        <span className="absolute right-0 bottom-0 h-[63%] w-[22px] bg-[#ff8cd2]" />
        <span className="absolute top-0 left-0 h-[63%] w-[23px] bg-[#808080]" />
        <Icon name="swap" className="absolute top-0 right-[2px] h-[28%] w-[10px]" />
        <Icon name="bw" className="absolute bottom-[9%] left-[3px] h-[22%] w-[9px]" />
      </div>
      <div className={`grid shrink-0 grid-cols-8 grid-rows-5 gap-px bg-[#b4b2a8] ${look.colors}`}>
        {colorCells.map((c) => <button key={c} type="button" aria-label="Colore" className={c} />)}
      </div>
      <div className={`grid shrink-0 grid-cols-2 gap-[2px] ${look.pager}`}>
        <button type="button" aria-label="Precedente" className="flex items-center justify-center bg-[#c2d3fc]"><Icon name="left" className="size-[7px]" /></button>
        <button type="button" aria-label="Successivo" className="flex items-center justify-center bg-[#c2d3fc]"><Icon name="right" className="size-[7px]" /></button>
      </div>
      <div className={`grid shrink-0 grid-cols-2 border-t border-b border-[#b5b2a2] ${look.tools}`}>
        {["cursor", "dropper", "wand", "line", "bucket", "spray", "brush", "brushPlus", "tear", "smudge", "rubber", "hand"].map((n, i) => (
          <button key={n} type="button" aria-label={n} className="flex items-center justify-center">
            <span className={`flex w-[18px] items-center justify-center ${look.cell} ${i === 0 ? "border border-[#555] bg-white" : ""}`}>
              <Icon name={n} className={look.icon} />
            </span>
          </button>
        ))}
      </div>
      <div className={`grid shrink-0 grid-cols-2 ${look.shapes}`}>
        {["rect", "oval", "roundRect", "diamond", "triangle", "lasso", "polyLasso", "open", "selH", "selV"].map((n) => (
          <button key={n} type="button" aria-label={n} className="flex items-center justify-center"><Icon name={n} className={look.icon} /></button>
        ))}
      </div>
    </aside>
  );
}

function Editor({ look, save = "save", undo = "undoOff", redo = "redoOff", railCount, hammer, menu, children }: {
  look: Look; save?: string; undo?: string; redo?: string; railCount?: number; hammer?: boolean; menu?: ReactNode; children: ReactNode;
}) {
  return (
    <section className="flex min-w-0 flex-col bg-[#ece9d8]">
      <TitleBar look={look} />
      <div className="relative z-10 flex flex-col">
        <MenuBar look={look} open={Boolean(menu)}>{menu}</MenuBar>
      </div>
      <Toolbars look={look} save={save} undo={undo} redo={redo} />
      <div className="flex min-h-0 flex-1">
        <Rail look={look} count={railCount} hammer={hammer} />
        <div className="relative min-w-0 flex-1 bg-[#828282]">
          <svg className="absolute inset-0 size-full" aria-hidden="true"><rect width="100%" height="100%" filter="url(#pf-paper)" /></svg>
          {children}
        </div>
        <Side look={look} />
      </div>
    </section>
  );
}

/* ---------- file menu ---------- */

type Entry = { text: string; keys?: string; off?: boolean; sub?: boolean; on?: boolean };
const fileMenu: Entry[][] = [
  [{ text: "Nuovo...", keys: "Ctrl+N", on: true }, { text: "Apri...", keys: "Ctrl+O" }, { text: "Ripristina", keys: "Ctrl+R", off: true }, { text: "File recenti", sub: true }],
  [{ text: "Salva", keys: "Ctrl+S", off: true }, { text: "Salva con nome...", keys: "Shift+Ctrl+S" }, { text: "Chiudi", keys: "Ctrl+W" }, { text: "Chiudi tutto" }],
  [{ text: "Stampa...", keys: "Ctrl+P" }, { text: "Acquisizione Twain", sub: true }],
  [{ text: "Proprietà dell'immagine", keys: "Ctrl+J" }],
  [{ text: "Importa", sub: true }, { text: "Esporta", sub: true }],
  [{ text: "Esci", keys: "Ctrl+Q" }],
];

function FileMenu() {
  return (
    <div role="menu" className="absolute top-full left-[3px] w-[144px] border border-[#9a9890] bg-linear-to-r from-[#dcd6de] via-white via-35% to-white p-[1px]">
      {fileMenu.map((group, g) => (
        <div key={g}>
          {g > 0 && <div className="flex h-2 items-center"><span className="h-px w-full bg-[#c9c6cc]" /></div>}
          {group.map((e) => (
            <button
              key={e.text}
              type="button"
              role="menuitem"
              className={`flex h-[22px] w-full items-center justify-between pl-[10px] ${e.sub ? "pr-1" : "pr-[11px]"} ${e.on ? "bg-linear-to-b from-[#9fb9ea] to-[#6c90d6] text-white outline outline-[#3f66b4]" : e.off ? "text-[#aaa7a2]" : ""}`}
            >
              <span>{e.text}</span>
              {e.keys && <span className={e.on || e.off ? "" : "text-[#7c1420]"}>{e.keys}</span>}
              {e.sub && <svg viewBox="0 0 4 8" className="h-2 w-[3px]" preserveAspectRatio="none" aria-hidden="true"><path d="M0 0v8l4-4z" fill="#000" /></svg>}
            </button>
          ))}
        </div>
      ))}
    </div>
  );
}

/* ---------- form parts ---------- */

const labelLine = "block h-[15px] leading-4";

function Field({ label, value, width, readOnly, spin }: { label: string; value: string; width: string; readOnly?: boolean; spin?: boolean }) {
  const id = useId();
  return (
    <div className={`flex flex-col ${width}`}>
      <label htmlFor={id} className={labelLine}>{label}</label>
      <div className={`flex h-[19px] border border-[#94aecb] ${readOnly ? "bg-[#ece9d8]" : "bg-white"}`}>
        <input id={id} defaultValue={value} readOnly={readOnly} className="w-full min-w-0 flex-1 pl-[1px] outline-none" />
        {spin && (
          <span className="my-px mr-px flex w-[10px] shrink-0 flex-col gap-px">
            <button type="button" aria-label="Aumenta" className="flex flex-1 items-center justify-center bg-[#ccd9fb]"><Icon name="up" className="size-[7px]" /></button>
            <button type="button" aria-label="Diminuisci" className="flex flex-1 items-center justify-center bg-[#ccd9fb]"><Icon name="downSolid" className="size-[7px]" /></button>
          </span>
        )}
      </div>
    </div>
  );
}

function Choice({ label, hideLabel, value, width }: { label: string; hideLabel?: boolean; value: string; width: string }) {
  const id = useId();
  return (
    <div className={`flex flex-col ${width}`}>
      {!hideLabel && <label htmlFor={id} className={labelLine}>{label}</label>}
      <div className="relative h-[19px] border border-[#94aecb] bg-white">
        <select id={id} aria-label={hideLabel ? label : undefined} className="size-full appearance-none pl-[2px] outline-none"><option>{value}</option></select>
        <span className="pointer-events-none absolute inset-y-0 right-0 flex w-[11px] items-center justify-center bg-[#c6d5fa]"><Icon name="down" className="size-[8px]" /></span>
      </div>
    </div>
  );
}

function ColorBox({ label, tone, width }: { label: string; tone: string; width: string }) {
  const id = useId();
  return (
    <div className={`flex flex-col ${width}`}>
      <label htmlFor={id} className={labelLine}>{label}</label>
      <button id={id} type="button" className="flex h-[19px] border border-[#94aecb] bg-white">
        <span className={`m-[2px] flex-1 self-stretch border border-[#8a97b0] ${tone}`} />
        <span className="flex w-[11px] items-center justify-center self-stretch bg-[#c6d5fa]"><Icon name="downSolid" className="size-[7px]" /></span>
      </button>
    </div>
  );
}

function Check({ label, checked }: { label: string; checked?: boolean }) {
  return (
    <label className="flex h-[17px] items-center gap-[2px] whitespace-nowrap">
      <span className="relative flex h-3 w-[9px]">
        <input type="checkbox" defaultChecked={checked} className="peer h-3 w-[9px] appearance-none border border-[#2c5a86] bg-white" />
        <svg viewBox="0 0 9 12" className="pointer-events-none absolute inset-0 hidden peer-checked:block" aria-hidden="true"><path d="m2 5.500 1.700 3L7 3" fill="none" stroke="#22a022" strokeWidth="1.800" /></svg>
      </span>
      {label}
    </label>
  );
}

function PushButton({ children, className }: { children: ReactNode; className: string }) {
  return <button type="button" className={`rounded-xs border bg-linear-to-b from-white to-[#efede4] text-center ${className}`}>{children}</button>;
}

/* ---------- dialogs and documents ---------- */

function NewDialog() {
  return (
    <div role="dialog" aria-label="Nuovo" className="absolute top-[82px] left-[354px] w-[214px] rounded-t-md border-2 border-t-0 border-b-[3px] border-[#0a38c4] bg-[#ece9d8]">
      <div className={`-mx-[1px] flex h-[25px] items-center rounded-t-md pr-[2px] pl-[4px] ${blueBar}`}>
        <h3 className="flex-1 pt-1 text-[10px] font-bold text-white">Nuovo</h3>
        <CaptionButton kind="close" size="h-[18px]" />
      </div>
      <form className="px-3 pt-[14px] pb-[13px]">
        <fieldset className="h-[68px] rounded-sm border border-[#d0ceb8] px-[8px] pt-[6px]">
          <legend className="-ml-[5px] px-[2px] leading-3 text-[#1a46b8]">Dimensione in pixel / Memoria</legend>
          <div className="flex gap-[9px]">
            <Field label="Larghezza :" value="350" width="w-[50px]" readOnly />
            <Field label="Altezza :" value="150" width="w-[50px]" readOnly />
            <Field label="Memoria :" value="153,81 Kb" width="w-[50px]" readOnly />
          </div>
        </fieldset>
        <fieldset className="mt-2 h-[254px] rounded-sm border border-[#d0ceb8] px-[8px] pt-[6px]">
          <legend className="-ml-[5px] px-[2px] leading-3 text-[#1a46b8]">Nuova dimensione</legend>
          <div className="flex items-center">
            <div className="flex flex-col gap-2">
              <Field label="Larghezza :" value="350" width="w-[60px]" spin />
              <Field label="Altezza :" value="150" width="w-[60px]" spin />
            </div>
            <svg viewBox="0 0 10 47" className="mt-4 ml-1 h-[47px] w-[10px]" aria-hidden="true"><path d="M0 1h6v45H0M6 23.500h4" fill="none" stroke="#000" strokeWidth="2" /></svg>
            <div className="mt-4 ml-[3px]"><Choice label="Unità" hideLabel value="pixel" width="w-[64px]" /></div>
          </div>
          <div className="mt-2 flex items-end gap-[5px]">
            <Field label="Risoluzione :" value="72,00" width="w-[60px]" spin />
            <Choice label="Unità di risoluzione" hideLabel value="pixel/inch" width="w-[76px]" />
          </div>
          <div className="mt-5 flex items-end gap-[9px]">
            <ColorBox label="Sfondo :" tone="bg-black" width="w-[50px]" />
            <div className="flex flex-col">
              <Check label="Trama di sfondo :" />
              <div className="mt-[2px] flex items-center gap-1">
                <input aria-label="Trama di sfondo, file" className="h-[19px] w-[91px] border border-[#b9c4c4] bg-[#ece9d8] outline-none" />
                <button type="button" aria-label="Sfoglia" className="grayscale opacity-60"><Icon name="open" className="h-[14px] w-[11px]" /></button>
              </div>
            </div>
          </div>
          <div className="mt-[11px]"><Choice label="Fissa dimensioni :" value="<personalizzato>" width="w-[151px]" /></div>
        </fieldset>
        <div className="mt-3 flex justify-end gap-[9px]">
          <PushButton className="h-[21px] w-[49px] border-[#1c4aa0] shadow-[inset_0_0_0_1px_#b0c8f4]">Ok</PushButton>
          <PushButton className="h-[21px] w-[49px] border-[#2c4a70]">Annulla</PushButton>
        </div>
      </form>
    </div>
  );
}

function DocWindow({ place, title, canvas, children }: { place: string; title: string; canvas: string; children?: ReactNode }) {
  return (
    <div className={`absolute flex flex-col rounded-t-md border-2 border-t-0 border-b-[3px] border-[#0a3ccc] bg-[#a0a0a0] ${place}`}>
      <div className={`-mx-[1px] flex shrink-0 items-center rounded-t-md pr-[3px] pl-[4px] ${blueBar} ${title}`}>
        <Icon name="doc" className="h-[14px] w-[9px]" />
        <h3 className="ml-[3px] flex-1 pt-[2px] text-[10px] font-bold text-white">Senza titolo 1</h3>
        <div className="flex gap-[2px]">
          <CaptionButton kind="min" size="h-5" />
          <CaptionButton kind="max" size="h-5" />
          <CaptionButton kind="close" size="h-5" />
        </div>
      </div>
      <div className={`flex flex-1 border-r-2 border-b-2 border-[#e4ecf8] ${canvas}`}>
        <div className="flex-1 bg-black shadow-[2px_2px_2px_#444]">{children}</div>
      </div>
    </div>
  );
}

function Step({ n, className }: { n: string; className: string }) {
  const face = n === "1" ? "font-['Roboto',sans-serif]" : "font-['Liberation_Sans',sans-serif]";
  return <span className={`pointer-events-none absolute font-bold leading-none ${face} ${className}`}>{n}</span>;
}

function ScrollButton({ name }: { name: string }) {
  return <button type="button" aria-label={name} className="flex h-4 w-[10px] shrink-0 items-center justify-center rounded-xs border border-[#e6e3d6] bg-[#f3f1e9]"><Icon name={name} className="size-[7px]" /></button>;
}

function TextDialog() {
  const area = useId();
  return (
    <div role="dialog" aria-label="Testo" className="absolute top-[91px] left-[275px] w-[384px] rounded-t-md border-2 border-t-0 border-b-[3px] border-[#6f84dc] bg-[#ece9d8]">
      <div className={`-mx-[1px] flex h-[26px] items-center rounded-t-md pr-[2px] pl-[3px] ${paleBar}`}>
        <h3 className="flex-1 pt-[2px] text-[10px] font-bold text-[#dbe6fa]">Testo</h3>
        <CaptionButton kind="close" pale size="h-[17px]" />
      </div>
      <div className="px-[5px] pt-[7px] pb-[11px]">
        <div role="tablist" className="flex items-end">
          <button type="button" role="tab" aria-selected="true" className="relative -mb-px h-[19px] w-[30px] rounded-t-xs border border-b-0 border-t-2 border-[#9a9a98] border-t-[#f0a838] bg-[#fdfdfc] leading-4">Testo</button>
          <button type="button" role="tab" aria-selected="false" className="h-[16px] w-[26px] rounded-t-xs border border-b-0 border-[#9a9a98] bg-[#f6f5ee] leading-4">Effetti</button>
        </div>
        <div className="h-[319px] border border-[#9a9a98] bg-linear-to-b from-[#fdfdfd] to-[#f4f3ee] pr-[12px] pl-[13px] pt-[17px]">
          <div className="relative flex h-[48px] border-b border-[#a5a5a0]">
            <Choice label="Carattere :" value="Arial Grassetto" width="w-[152px]" />
            <Step n="2" className="top-[13px] left-[78px] text-[24px] text-[#ff00ff]" />
            <div className="ml-[16px]"><Field label="Dimensione :" value="25" width="w-[44px]" spin /></div>
            <Step n="3" className="top-[13px] left-[185px] text-[24px] text-[#ff00ff]" />
            <Step n="4" className="-top-[2px] left-[217px] text-[19px] text-[#ff00ff]" />
            <div className="ml-[16px] grid h-[34px] grid-cols-[54px_auto] grid-rows-2">
              <Check label="Grassetto" checked /><Check label="Barrato" /><Check label="Corsivo" /><Check label="Sottolineato" />
            </div>
          </div>
          <div className="relative flex h-[58px] border-b border-[#a5a5a0] pt-[9px]">
            <ColorBox label="Colore :" tone="bg-white" width="w-[54px]" />
            <Step n="5" className="top-[20px] -left-[13px] text-[26px] text-[#ff00ff]" />
            <div className="ml-[16px] w-[65px]">
              <span className={labelLine}>Alineamento :</span>
              <div className="flex gap-[3px]">
                <button type="button" aria-label="A sinistra" className="flex h-[19px] w-[14px] items-center justify-center rounded-xs border border-[#a8a698] bg-[#e4e1d4]"><Icon name="alignL" className="h-[11px] w-[10px]" /></button>
                <button type="button" aria-label="Al centro" className="flex h-[19px] w-[14px] items-center justify-center"><Icon name="alignC" className="h-[11px] w-[10px]" /></button>
                <button type="button" aria-label="A destra" className="flex h-[19px] w-[14px] items-center justify-center"><Icon name="alignR" className="h-[11px] w-[10px]" /></button>
              </div>
            </div>
            <Field label="Angolo :" value="0" width="w-[44px]" spin />
            <div className="mt-[14px] ml-[21px]"><Check label="Antialias" checked /></div>
            <PushButton className="mt-[1px] ml-auto h-[21px] w-[81px] border-[#2c4a70]">Cancella testo</PushButton>
          </div>
          <div className="relative flex gap-[5px] pt-[9px]">
            <div className="w-[217px]">
              <label htmlFor={area} className={labelLine}>Testo :</label>
              <div className="flex h-[153px] flex-col border border-[#94aecb] bg-white">
                <div className="flex min-h-0 flex-1">
                  <textarea id={area} defaultValue="BESITOS A TODOS" className="min-w-0 flex-1 resize-none pt-[2px] pl-[5px] text-[11px] font-bold leading-[17px] outline-none" />
                  <div className="flex w-[10px] flex-col justify-between bg-[#f8f7f3]"><ScrollButton name="upOff" /><ScrollButton name="downOff" /></div>
                </div>
                <div className="flex justify-between bg-[#f8f7f3] pr-[10px]"><ScrollButton name="leftOff" /><ScrollButton name="rightOff" /></div>
              </div>
            </div>
            <Step n="6" className="top-[25px] left-[115px] text-[21px] text-[#ff00ff]" />
            <div className="w-[120px]">
              <span className={labelLine}>Anteprima :</span>
              <div className="flex h-[153px] items-center justify-center border border-[#b8b6ac] border-r-white border-b-white bg-[#f1f0ec] text-[24px] font-bold">AbYz</div>
            </div>
          </div>
        </div>
        <div className="relative mt-[11px] flex gap-1">
          <PushButton className="mr-auto h-[21px] w-[118px] border-[#2c4a70]">Trasformare in selezione</PushButton>
          <PushButton className="h-[21px] w-[50px] border-[#2c4a70] shadow-[inset_0_0_0_2px_#f4c460]">Ok</PushButton>
          <PushButton className="h-[21px] w-[50px] border-[#2c4a70]">Annulla</PushButton>
          <Step n="7" className="-top-px right-[87px] text-[22px] text-[#ff00ff]" />
        </div>
      </div>
    </div>
  );
}

export default function App() {
  return (
    <main className="grid min-h-screen grid-cols-[975fr_970fr] grid-rows-[611fr_616fr] gap-x-[17px] gap-y-[18px] bg-[#ffcc00] pt-[19px] pr-[18px] pb-[18px] pl-5 font-['Roboto','Liberation_Sans',sans-serif] text-[9px] leading-3 whitespace-nowrap text-black">
      <Defs />
      <Editor look={looks.a} railCount={17} menu={<FileMenu />}>
        <Step n="1" className="bottom-[-6px] left-[6px] text-[88px] text-[#ffcc00]" />
      </Editor>
      <Editor look={looks.b} save="saveOff" redo="redo">
        <NewDialog />
        <Step n="2" className="bottom-[-5px] left-[8px] text-[88px] text-[#ffcc00]" />
      </Editor>
      <Editor look={looks.c}>
        <DocWindow place="top-[45px] left-[95px] h-[185px] w-[256px]" title="h-[27px]" canvas="pt-[8px] pr-[4px] pb-[8px] pl-[7px]" />
        <TextDialog />
        <svg viewBox="0 0 24 70" className="absolute -top-[37px] left-[238px] h-[70px] w-6" aria-hidden="true">
          <path d="M20 68 8 12" stroke="#ff8cc8" strokeWidth="4" /><path d="M5 0 0 16l13-2z" fill="#ff8cc8" />
        </svg>
        <Step n="1" className="-top-[6px] left-[269px] text-[53px] text-[#ff00ff]" />
        <Step n="3" className="bottom-[-6px] left-[13px] text-[88px] text-[#ffcc00]" />
      </Editor>
      <Editor look={looks.d} save="saveOlive" undo="undo" hammer>
        <DocWindow place="top-[49px] left-[94px] h-[201px] w-[254px]" title="h-[29px]" canvas="pt-[9px] pr-[5px] pb-[9px] pl-[7px]">
          <div className="flex h-full items-start justify-center pt-[43px]">
            <span className="border-y border-dashed border-[#bbb] text-[24px] leading-[22px] font-bold text-white">BESITOS A TODOS</span>
          </div>
        </DocWindow>
        <Step n="4" className="bottom-[-6px] left-[5px] text-[88px] text-[#ffcc00]" />
      </Editor>
    </main>
  );
}
